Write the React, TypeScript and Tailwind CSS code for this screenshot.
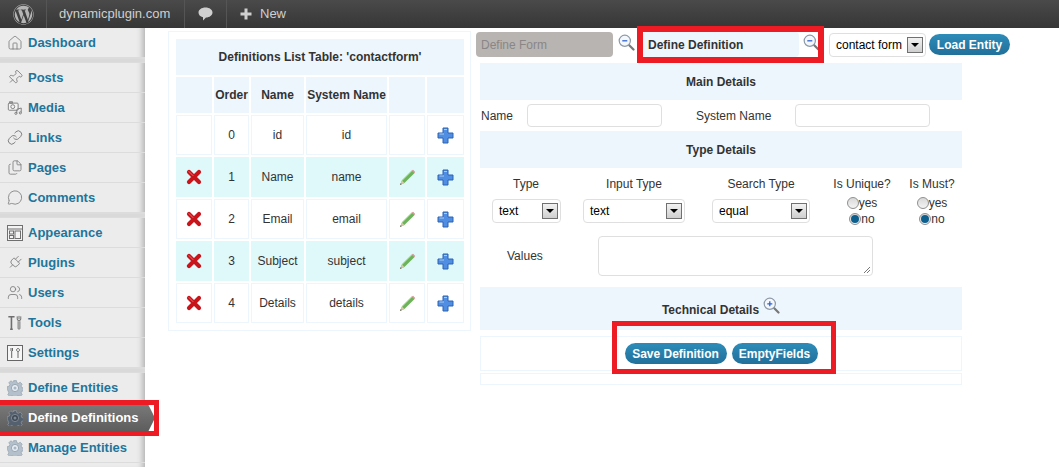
import { FaWordpress } from "react-icons/fa";
import { Home, Pin, Link, Files, MessageCircle, Plug, Users } from "lucide-react";

const font = "font-['Liberation_Sans',Arial,sans-serif]";

function MediaIcon() {
  return (
    <svg width="18" height="18" viewBox="0 0 18 18" fill="none" stroke="#777" strokeWidth="1">
      <rect x="1.5" y="3.5" width="11" height="8" rx="1" fill="#f4f4f4" />
      <circle cx="6.5" cy="7.5" r="2.2" />
      <rect x="3" y="2" width="3" height="1.5" />
      <path d="M11 11v4M16 9v5M11 10.5l5-1.5" />
      <circle cx="10" cy="15" r="1.2" />
      <circle cx="15" cy="14.5" r="1.2" />
    </svg>
  );
}

function AppearanceIcon() {
  return (
    <svg width="16" height="16" viewBox="0 0 16 16" fill="#f4f4f4" stroke="#6f6f6f" strokeWidth="1">
      <rect x="0.5" y="0.5" width="15" height="15" />
      <path d="M0.5 4h15" />
      <rect x="2.5" y="6" width="4" height="3" />
      <rect x="2.5" y="10.5" width="4" height="3" />
      <rect x="8" y="6" width="5.5" height="7.5" />
    </svg>
  );
}

function ToolsIcon() {
  return (
    <svg width="18" height="18" viewBox="0 0 18 18" fill="none" stroke="#6f6f6f" strokeWidth="1.1">
      <path d="M1.5 2h7M5 2v14M3.5 16h3" strokeWidth="1.8" />
      <path d="M13.5 1v4M11.5 1.5v3a2 2 0 0 0 4 0v-3M12.5 7v8a1 1 0 0 0 2 0V7" />
    </svg>
  );
}

function SettingsIcon() {
  return (
    <svg width="16" height="16" viewBox="0 0 16 16" fill="#f6f6f6" stroke="#666" strokeWidth="1">
      <rect x="0.5" y="0.5" width="15" height="15" />
      <path d="M4 3v3M5.5 3v3M4.7 6v7M11 3.5a1.5 1.5 0 1 0 .1 0M11 6.5V13" fill="none" />
    </svg>
  );
}

function GearIcon({ active }: { active?: boolean }) {
  const body = active ? "#55606e" : "#b4c0cc";
  return (
    <svg width="16" height="16" viewBox="0 0 16 16">
      <path
        d="M6.6.6h2.8l.4 2 1.7.7 1.7-1.1 2 2-1.1 1.7.7 1.7 1.9.4v2.8l-1.9.4-.7 1.7 1.1 1.7-2 2-1.7-1.1-1.7.7-.4 1.9H6.6l-.4-1.9-1.7-.7-1.7 1.1-2-2 1.1-1.7-.7-1.7L.3 9.4V6.6l1.9-.4.7-1.7-1.1-1.7 2-2 1.7 1.1 1.7-.7z"
        fill={body}
        stroke={active ? "#9aa3ad" : "#8c9aa8"}
        strokeWidth="0.6"
      />
      <circle cx="8" cy="8" r="3.6" fill={active ? "#3f4854" : "#e6ecf2"} stroke={active ? "#8b95a1" : "#8c9aa8"} strokeWidth="0.8" />
      <circle cx="8" cy="8" r="1.5" fill={active ? "#7d8894" : "#a9b6c3"} />
    </svg>
  );
}

function Lens({ plus }: { plus?: boolean }) {
  return (
    <svg width="17" height="17" viewBox="0 0 17 17" className="shrink-0">
      <path d="M10.5 10.5l5 5" stroke="#777" strokeWidth="2.2" strokeLinecap="round" />
      <circle cx="6.8" cy="6.8" r="5.6" fill="#f4f8fd" stroke="#8d99a6" strokeWidth="1.2" />
      <path d={plus ? "M4.3 6.8h5M6.8 4.3v5" : "M4.3 6.8h5"} stroke="#2f62d0" strokeWidth="1.3" />
    </svg>
  );
}

function DeleteIcon() {
  return (
    <svg width="16" height="16" viewBox="0 0 16 16">
      <path d="M3 3l10 10M13 3L3 13" stroke="#c8151b" strokeWidth="4.2" strokeLinecap="round" />
      <path d="M3 2.6l4 4" stroke="#e9686a" strokeWidth="1" strokeLinecap="round" />
    </svg>
  );
}

function EditIcon() {
  return (
    <svg width="17" height="17" viewBox="0 0 17 17">
      <path d="M1 16l2-4.5L13 1.6l2.6 2.4L5.4 14z" fill="#6cb35a" />
      <path d="M3 11.5l10-9.9" stroke="#a8dc94" strokeWidth="1" />
      <path d="M1 16l2-4.5 2.4 2.5z" fill="#d8c6a6" />
      <path d="M1 16l.8-1.8.9.9z" fill="#444" />
      <path d="M13 1.6l1-.8 2.2 2.2-.6 1z" fill="#d88a8a" />
    </svg>
  );
}

function AddIcon() {
  return (
    <svg width="17" height="17" viewBox="0 0 17 17">
      <path
        d="M6 1h5v5h5v5h-5v5H6v-5H1V6h5z"
        fill="#4f8ee2"
        stroke="#2d62b4"
        strokeWidth="1"
        strokeLinejoin="round"
      />
      <path d="M7 2.5h3M2.5 7H7" stroke="#a9cdf6" strokeWidth="1" />
    </svg>
  );
}

function Arrow() {
  return (
    <span className="flex h-[16px] w-[16px] shrink-0 items-center justify-center border border-[#707070] bg-gradient-to-b from-[#f2f2f2] to-[#cfcfcf]">
      <svg width="8" height="4" viewBox="0 0 8 4">
        <path d="M0 0h8L4 4z" fill="#000" />
      </svg>
    </span>
  );
}

function Select({ value, className }: { value: string; className: string }) {
  return (
    <div
      className={
        "flex h-[24px] items-center justify-between rounded-[4px] border border-[#dfdfdf] bg-white pl-[6px] pr-[2px] text-[12px] text-black " +
        className
      }
    >
      <span>{value}</span>
      <Arrow />
    </div>
  );
}

function Radio({ label, checked }: { label: string; checked?: boolean }) {
  return (
    <div className="flex h-[16px] items-center justify-center text-[12px] text-[#333]">
      <span className="flex h-[12px] w-[12px] items-center justify-center rounded-full border border-[#8f8f8f] bg-gradient-to-b from-[#d8d8d8] to-[#f4f4f4]">
        {checked && <span className="h-[8px] w-[8px] rounded-full bg-[#0d5f8e]" />}
      </span>
      <span>{label}</span>
    </div>
  );
}

function Pill({ children, className }: { children: React.ReactNode; className: string }) {
  return (
    <button
      className={
        "h-[21px] rounded-full bg-gradient-to-b from-[#2e8cb9] to-[#21709a] text-[12px] font-bold text-white " + className
      }
    >
      {children}
    </button>
  );
}

function SectionBar({ children, className }: { children: React.ReactNode; className: string }) {
  return (
    <div className={"flex items-center justify-center bg-[#eef6fd] text-[12px] font-bold text-[#333] " + className}>
      {children}
    </div>
  );
}

const menuGroups = [
  [{ label: "Dashboard", icon: <Home size={18} strokeWidth={1.2} color="#777" /> }],
  [
    { label: "Posts", icon: <Pin size={17} strokeWidth={1.2} color="#777" className="rotate-45" /> },
    { label: "Media", icon: <MediaIcon /> },
    { label: "Links", icon: <Link size={17} strokeWidth={1.4} color="#777" /> },
    { label: "Pages", icon: <Files size={17} strokeWidth={1.2} color="#777" /> },
    { label: "Comments", icon: <MessageCircle size={17} strokeWidth={1.2} color="#777" /> },
  ],
  [
    { label: "Appearance", icon: <AppearanceIcon /> },
    { label: "Plugins", icon: <Plug size={17} strokeWidth={1.2} color="#777" className="rotate-45" /> },
    { label: "Users", icon: <Users size={17} strokeWidth={1.2} color="#777" /> },
    { label: "Tools", icon: <ToolsIcon /> },
    { label: "Settings", icon: <SettingsIcon /> },
  ],
  [
    { label: "Define Entities", icon: <GearIcon /> },
    { label: "Define Definitions", icon: <GearIcon active />, active: true },
    { label: "Manage Entities", icon: <GearIcon /> },
  ],
];

function Sidebar() {
  return (
    <aside className="h-[439px] w-[145px] shrink-0 bg-[#ececec] shadow-[inset_-7px_0_6px_-5px_rgba(0,0,0,0.28)]">
      {menuGroups.map((group, i) => (
        <div key={i}>
          {group.map((item: any) =>
            item.active ? (
              <div key={item.label} className="relative h-[30px] w-[145px]">
                <div className="absolute left-0 top-[1px] flex h-[28px] w-[155px] items-center gap-[5px] bg-gradient-to-b from-[#7a7a7a] to-[#5c5c5c] pl-[7px] text-[13px] font-bold text-white [clip-path:polygon(0_0,148px_0,155px_50%,148px_100%,0_100%)]">
                  <span className="flex w-[16px] justify-center">{item.icon}</span>
                  {item.label}
                </div>
              </div>
            ) : (
              <div
                key={item.label}
                className="flex h-[30px] items-center gap-[5px] border-b border-[#dcdcdc] pl-[7px] text-[13px] font-bold text-[#21759b]"
              >
                <span className="flex w-[16px] justify-center">{item.icon}</span>
                {item.label}
              </div>
            ),
          )}
          {i < menuGroups.length - 1 && (
            <div className="h-[5px] border-y border-[#dcdcdc] bg-[#d9d9d9]" />
          )}
        </div>
      ))}
    </aside>
  );
}

const rows = [
  { order: "0", name: "id", system: "id", fixed: true },
  { order: "1", name: "Name", system: "name", tint: true },
  { order: "2", name: "Email", system: "email" },
  { order: "3", name: "Subject", system: "subject", tint: true },
  { order: "4", name: "Details", system: "details" },
];

function DefinitionsTable() {
  const head = "flex h-[36px] items-center justify-center bg-[#eef6fd] text-[12px] font-bold text-[#333]";
  return (
    <div className="mt-[3px] w-[303px] shrink-0 border border-[#eef6fd] px-[7px] py-[7px]">
      <div className="grid grid-cols-[36px_35px_53px_81px_36px_37px] gap-[2px] text-[12px] text-[#333]">
        <div className={head + " col-span-6"}>Definitions List Table: 'contactform'</div>
        <div className={head} />
        <div className={head}>Order</div>
        <div className={head}>Name</div>
        <div className={head}>System Name</div>
        <div className={head} />
        <div className={head} />
        {rows.map((row) => {
          const cell =
            "flex h-[40px] items-center justify-center " +
            (row.tint ? "bg-[#dff8fa]" : "border border-[#eef6fd] bg-white");
          return [
            <div key={row.order + "x"} className={cell}>{!row.fixed && <DeleteIcon />}</div>,
            <div key={row.order + "o"} className={cell}>{row.order}</div>,
            <div key={row.order + "n"} className={cell}>{row.name}</div>,
            <div key={row.order + "s"} className={cell}>{row.system}</div>,
            <div key={row.order + "e"} className={cell}>{!row.fixed && <EditIcon />}</div>,
            <div key={row.order + "a"} className={cell}><AddIcon /></div>,
          ];
        })}
      </div>
    </div>
  );
}

function DefinitionForm() {
  const input = "h-[23px] rounded-[4px] border border-[#dfdfdf] bg-white";
  return (
    <div className="ml-[5px] w-[570px] shrink-0 pt-[4px] text-[12px] text-[#333]">
      {/* tabs and entity picker */}
      <div className="flex h-[25px] items-center">
        <div className="flex h-[25px] w-[137px] items-center rounded-[4px] bg-[#b8b4b2] pl-[5px] text-[12px] text-[#8a8685]">
          Define Form
        </div>
        <span className="ml-[5px] -translate-y-[2px]"><Lens /></span>
        <div className="ml-[7px] flex h-[25px] w-[157px] items-center rounded-[4px] bg-[#eef6fd] pl-[6px] font-bold">
          Define Definition
        </div>
        <span className="ml-[4px] -translate-y-[2px]"><Lens /></span>
        <Select value="contact form" className="ml-[9px] w-[97px]" />
        <Pill className="ml-[3px] w-[81px]">Load Entity</Pill>
      </div>

      <div className="ml-[4px] mt-[6px] w-[482px]">
        <SectionBar className="h-[37px]">Main Details</SectionBar>
        <div className="flex h-[31px] items-center">
          <span className="ml-[1px] w-[46px]">Name</span>
          <div className={input + " w-[135px]"} />
          <span className="ml-[34px] w-[99px]">System Name</span>
          <div className={input + " w-[135px]"} />
        </div>
        <SectionBar className="h-[37px]">Type Details</SectionBar>

        <div className="mt-[8px] grid grid-cols-[92px_124px_130px_72px_68px] text-center">
          <div className="flex h-[15px] items-center justify-center">Type</div>
          <div className="flex h-[15px] items-center justify-center">Input Type</div>
          <div className="flex h-[15px] items-center justify-center">Search Type</div>
          <div className="flex h-[15px] items-center justify-center">Is Unique?</div>
          <div className="flex h-[15px] items-center justify-center">Is Must?</div>
          <div className="mt-[8px] pl-[12px]"><Select value="text" className="w-[69px]" /></div>
          <div className="mt-[8px] pl-[11px]"><Select value="text" className="w-[102px]" /></div>
          <div className="mt-[8px] pl-[16px]"><Select value="equal" className="w-[98px]" /></div>
          <div className="mt-[4px]"><Radio label="yes" /><Radio label="no" checked /></div>
          <div className="mt-[4px]"><Radio label="yes" /><Radio label="no" checked /></div>
        </div>

        <div className="mt-[9px] flex h-[40px] items-center">
          <span className="w-[118px] pl-[27px]">Values</span>
          <div className="relative h-[40px] w-[275px] rounded-[4px] border border-[#dfdfdf] bg-white">
            <svg width="8" height="8" viewBox="0 0 8 8" className="absolute bottom-[1px] right-[1px]">
              <path d="M1 7l6-6M4 7l3-3" stroke="#777" strokeWidth="1" />
            </svg>
          </div>
        </div>

        <SectionBar className="mt-[11px] h-[43px] gap-[4px]">
          <span className="translate-y-[1px]">Technical Details</span>
          <span className="-translate-y-[3px]"><Lens plus /></span>
        </SectionBar>
        <div className="mt-[6px] flex h-[35px] items-center justify-center gap-[5px] border border-[#eef6fd]">
          <Pill className="w-[102px]">Save Definition</Pill>
          <Pill className="w-[86px]">EmptyFields</Pill>
        </div>
        <div className="mt-[2px] h-[12px] border border-[#eef6fd]" />
      </div>
    </div>
  );
}

export default function App() {
  return (
    <div className={"relative h-[467px] w-[1059px] overflow-hidden bg-white " + font}>
      <header className="flex h-[28px] items-center bg-gradient-to-b from-[#4a4a4a] to-[#363636] text-[13px] text-[#cfcfcf]">
        <div className="flex h-full w-[47px] items-center justify-center border-r border-[#555]">
          <FaWordpress size={21} color="#b5b5b5" />
        </div>
        <div className="flex h-full w-[138px] items-center border-r border-[#555] pl-[12px]">dynamicplugin.com</div>
        <div className="flex h-full w-[42px] items-center justify-center border-r border-[#555]">
          <svg width="15" height="14" viewBox="0 0 15 14">
            <path d="M7.5 0.5c4 0 7 2.2 7 5s-3 5-6.5 5L5 13.5v-3.2C2 9.6.5 7.8.5 5.500c0-2.800 3-5 7-5z" fill="#cfcfcf" />
          </svg>
        </div>
        <div className="flex items-center gap-[8px] pl-[13px]">
          <svg width="12" height="12" viewBox="0 0 12 12">
            <path d="M4.500 0.500h3v4h4v3h-4v4h-3v-4h-4v-3h4z" fill="#cfcfcf" />
          </svg>
          New
        </div>
      </header>

      <div className="flex items-start">
        <Sidebar />
        <main className="flex items-start pl-[23px]">
          <DefinitionsTable />
          <DefinitionForm />
        </main>
      </div>

      {/* red annotation frames */}
      <div className="pointer-events-none absolute left-[637px] top-[26px] h-[37px] w-[187px] border-[6px] border-[#ed1c24]" />
      <div className="pointer-events-none absolute left-[612px] top-[321px] h-[53px] w-[224px] border-[5px] border-[#ed1c24]" />
      <div className="pointer-events-none absolute -left-[5px] top-[400px] h-[36px] w-[164px] border-[5px] border-[#ed1c24]" />
    </div>
  );
}
